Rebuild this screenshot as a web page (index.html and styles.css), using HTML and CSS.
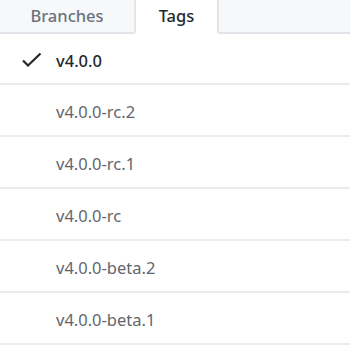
FILE: index.html
```html
<!DOCTYPE html>
<html>
<head>
<meta charset="utf-8">
<link rel="stylesheet" href="styles.css">
</head>
<body>
<div class="panel">
  <div class="tabs">
    <div class="tab">Branches</div>
    <div class="tab active">Tags</div>
    <div class="tab-fill"></div>
  </div>
  <ul class="list">
    <li class="item selected">
      <svg class="check" width="22" height="18" viewBox="0 0 22 18"><path d="M2 8.5 L7 13.5 L19.5 1.5" fill="none" stroke="#24292e" stroke-width="2.2"/></svg>
      <span>v4.0.0</span>
    </li>
    <li class="item"><span>v4.0.0-rc.2</span></li>
    <li class="item"><span>v4.0.0-rc.1</span></li>
    <li class="item"><span>v4.0.0-rc</span></li>
    <li class="item"><span>v4.0.0-beta.2</span></li>
    <li class="item"><span>v4.0.0-beta.1</span></li>
  </ul>
</div>
</body>
</html>
```
FILE: styles.css
```css
html, body {
  margin: 0;
  padding: 0;
  background: #fff;
}
body {
  font-family: "Noto Sans", "Open Sans", sans-serif;
  width: 350px;
  height: 362px;
  overflow: hidden;
}
.tabs {
  display: flex;
  height: 34px;
}
.tab {
  box-sizing: border-box;
  display: flex;
  align-items: center;
  justify-content: center;
  font-size: 16.5px;
  font-weight: 500;
  color: #6a737d;
  background: #f6f8fa;
  border-bottom: 2px solid #e1e4e8;
  padding-bottom: 2px;
}
.tab:first-child {
  width: 134px;
}
.tab.active {
  width: 85px;
  background: #fff;
  color: #24292e;
  border-bottom-color: transparent;
  border-left: 2px solid #e1e4e8;
  border-right: 2px solid #e1e4e8;
}
.tab-fill {
  flex: 1;
  background: #f6f8fa;
  border-bottom: 2px solid #e1e4e8;
  box-sizing: border-box;
}
.list {
  list-style: none;
  margin: 0;
  padding: 0;
}
.item {
  box-sizing: border-box;
  height: 52px;
  display: flex;
  align-items: center;
  padding-left: 56px;
  padding-top: 3px;
  position: relative;
  font-size: 16.5px;
  color: #5f666e;
  border-bottom: 2px solid #eaecef;
}
.item.selected {
  color: #24292e;
  font-weight: 500;
  height: 51px;
}
.check {
  position: absolute;
  left: 21px;
  top: 18px;
}
```
